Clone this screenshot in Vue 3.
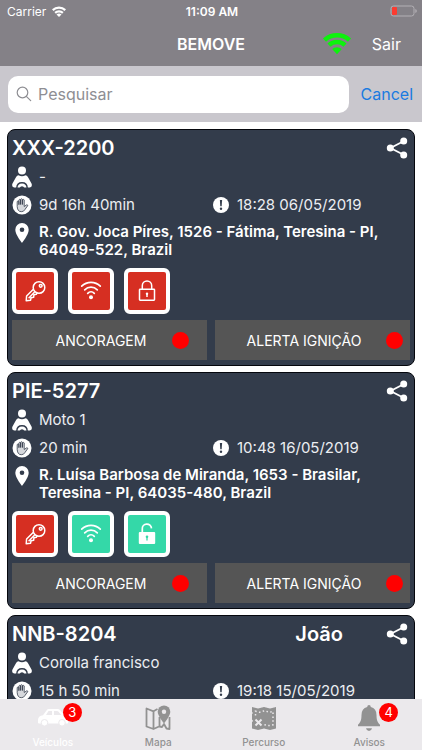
<script setup>
import { ref } from 'vue'

const query = ref('')
const tab = ref('Veículos')

const vehicles = [
  {
    plate: 'XXX-2200', driver: '', name: '-', idle: '9d 16h 40min', date: '18:28 06/05/2019',
    address: ['R. Gov. Joca Píres, 1526 - Fátima, Teresina - PI,', '64049-522, Brazil'],
    online: false, locked: true
  },
  {
    plate: 'PIE-5277', driver: '', name: 'Moto 1', idle: '20 min', date: '10:48 16/05/2019',
    address: ['R. Luísa Barbosa de Miranda, 1653 - Brasilar,', 'Teresina - PI, 64035-480, Brazil'],
    online: true, locked: false
  },
  {
    plate: 'NNB-8204', driver: 'João', name: 'Corolla francisco', idle: '15 h 50 min', date: '19:18 15/05/2019',
    address: [],
    online: true, locked: false
  }
]

const tabs = [
  { label: 'Veículos', badge: 3 },
  { label: 'Mapa', badge: 0 },
  { label: 'Percurso', badge: 0 },
  { label: 'Avisos', badge: 4 }
]
</script>

<template>
  <div class="app">
    <header class="top">
      <div class="status">
        <div class="carrier">
          <span>Carrier</span>
          <svg width="14" height="11" viewBox="0 0 28 22" fill="none" stroke="#fff" stroke-width="4.400">
            <path d="M1.500 8.300a18 18 0 0 1 25 0M6.300 13.800a11 11 0 0 1 15.400 0" />
            <path d="M14 22l-5-5a7.500 7.500 0 0 1 10 0z" fill="#fff" stroke="none" />
          </svg>
        </div>
        <strong class="clock">11:09 AM</strong>
        <svg class="battery" width="27" height="12" viewBox="0 0 27 12">
          <rect x="1" y="1" width="23" height="10" rx="2.500" fill="none" stroke="#b3b0b5" />
          <rect x="2" y="2" width="5" height="8" rx="1" fill="#fb3b30" />
          <path d="M25.300 4v4q1.500-.5 1.500-2t-1.500-2z" fill="#b3b0b5" />
        </svg>
      </div>
      <div class="nav">
        <h1>BEMOVE</h1>
        <div class="nav-right">
          <svg width="30" height="24" viewBox="0 0 30 24" fill="none" stroke="#0df20d" stroke-width="4.600">
            <path d="M2.500 8.100a18.700 18.700 0 0 1 25 0M7 13.100a12 12 0 0 1 16 0" />
            <path d="M15 22.200l-4.800-5.200a7.200 7.200 0 0 1 9.600 0z" fill="#0df20d" stroke="none" />
          </svg>
          <button type="button" class="link exit">Sair</button>
        </div>
      </div>
    </header>

    <form class="search" role="search" @submit.prevent>
      <label class="field">
        <svg width="16" height="16" viewBox="0 0 16 16" fill="none" stroke="#8e8e93" stroke-width="1.200">
          <circle cx="6.500" cy="6.500" r="5.300" /><path d="M10.300 10.300l4.400 4.400" stroke-linecap="round" />
        </svg>
        <input v-model="query" type="text" placeholder="Pesquisar" aria-label="Pesquisar" />
      </label>
      <button type="button" class="link cancel" @click="query = ''">Cancel</button>
    </form>

    <main class="list">
      <article v-for="v in vehicles" :key="v.plate" class="card">
        <div class="head">
          <h2>{{ v.plate }}</h2>
          <span class="driver">{{ v.driver }}</span>
          <button type="button" class="share" aria-label="Compartilhar">
            <svg width="22" height="22" viewBox="0 0 22 22" fill="#fff">
              <path d="M18 4L4.500 11 18 18" fill="none" stroke="#fff" stroke-width="1.800" />
              <circle cx="17.700" cy="4" r="3.500" /><circle cx="4.300" cy="11" r="3.500" /><circle cx="17.700" cy="18" r="3.500" />
            </svg>
          </button>
        </div>

        <div class="row name">
          <svg width="20" height="22" viewBox="0 0 20 22" fill="#fff">
            <circle cx="10" cy="4.500" r="4" />
            <path d="M6.500 9.300Q10 11 13.500 9.300q1.500 0 2.400 1.700l3.600 6.600q1.200 3-1.600 3.900H2.100q-2.800-.9-1.600-3.900L4.100 11q.9-1.700 2.400-1.700z" />
            <path d="M4.800 22q.2-5.200 5.200-5.200t5.200 5.200" fill="none" stroke="#333c4b" stroke-width="1.400" />
            <path d="M7.800 22q.4-1.700 2.200-1.700t2.200 1.700z" fill="#333c4b" />
          </svg>
          <span>{{ v.name }}</span>
        </div>

        <div class="times">
          <div class="row">
            <svg width="20" height="20" viewBox="0 0 20 20">
              <circle cx="10" cy="10" r="9.500" fill="#fff" />
              <path d="M5.200 11.500V6.500q.8-1.200 1.700 0v3.200V4.900q.8-1.200 1.700 0v4.600V4.300q.9-1.200 1.800 0v5.200V4.900q.9-1.100 1.800 0v6.600l2.300-1.600q1.400-.3 1.200.8l-2.900 4q-1 2-3.500 2-3.700 0-4.100-5z" fill="#d6d8dc" stroke="#333c4b" stroke-width=".8" stroke-linejoin="round" />
            </svg>
            <span>{{ v.idle }}</span>
          </div>
          <div class="row">
            <svg width="16" height="16" viewBox="0 0 16 16">
              <circle cx="8" cy="8" r="8" fill="#fff" />
              <path d="M6.900 3h2.200l-.4 6.200H7.300z" fill="#333c4b" /><circle cx="8" cy="11.700" r="1.200" fill="#333c4b" />
            </svg>
            <span>{{ v.date }}</span>
          </div>
        </div>

        <div class="row place">
          <svg width="20" height="20" viewBox="0 0 20 20">
            <path d="M10 0a6.700 6.700 0 0 1 6.700 6.800C16.700 11.800 10 20 10 20S3.300 11.800 3.300 6.800A6.700 6.700 0 0 1 10 0z" fill="#fff" />
            <circle cx="10" cy="6.800" r="2.300" fill="#333c4b" />
          </svg>
          <address><span v-for="line in v.address" :key="line">{{ line }}</span></address>
        </div>

        <div class="tiles">
          <button type="button" class="tile" aria-label="Ignição">
            <svg width="22" height="22" viewBox="0 0 22 22" fill="none" stroke="#fff" stroke-width="1.500" stroke-linejoin="round">
              <circle cx="15" cy="7.500" r="5.800" /><circle cx="16.700" cy="5.800" r="1.400" />
              <path d="M9.400 9.200L2.600 16l-.4 4.700 4.300-.5.600-2.500 2.500-.4.400-2.600 2.300-.5.900-1.300M4.600 18.200l6-6.300" />
            </svg>
          </button>
          <button type="button" class="tile" :class="{ on: v.online }" aria-label="Conexão">
            <svg width="22" height="22" viewBox="0 0 22 22" fill="none" stroke="#fff" stroke-width="1.700" stroke-linecap="round">
              <path d="M1.700 6.200a13 13 0 0 1 18.600 0M4.700 9.800a8.900 8.900 0 0 1 12.600 0M7.700 13.300a4.700 4.700 0 0 1 6.600 0" />
              <circle cx="11" cy="17.200" r="2" fill="#fff" stroke="none" />
            </svg>
          </button>
          <button type="button" class="tile" :class="{ on: !v.locked }" aria-label="Bloqueio">
            <svg v-if="v.locked" width="22" height="22" viewBox="0 0 22 22" fill="none" stroke="#fff" stroke-width="1.500">
              <rect x="3.500" y="9.200" width="15" height="11" rx=".6" />
              <path d="M6.300 9V5.700a4.700 4.700 0 0 1 9.400 0V9" />
              <circle cx="11" cy="13.700" r="1.200" fill="#fff" stroke="none" /><path d="M11 14v3" />
            </svg>
            <svg v-else width="22" height="22" viewBox="0 0 22 22" fill="none" stroke="#fff" stroke-width="1.700">
              <rect x="2.800" y="9" width="16.400" height="12" rx="1" fill="#fff" stroke="none" />
              <path d="M6.300 9.500V6a4.600 4.600 0 0 1 9.200-.6" />
              <circle cx="11" cy="13.800" r="1.300" fill="#34d8a8" stroke="none" /><path d="M11 14v3.500" stroke="#34d8a8" stroke-width="1.300" />
            </svg>
          </button>
        </div>

        <div class="actions">
          <button type="button" class="action anchor"><span>ANCORAGEM</span><i class="dot"></i></button>
          <button type="button" class="action alert"><span>ALERTA IGNIÇÃO</span><i class="dot"></i></button>
        </div>
      </article>
    </main>

    <nav class="tabs">
      <a v-for="t in tabs" :key="t.label" href="#" class="tab" :class="{ active: tab === t.label }" @click.prevent="tab = t.label">
        <span class="glyph">
          <svg v-if="t.label === 'Veículos'" width="32" height="26" viewBox="0 0 32 26">
            <path d="M1 15q0-4 5-4.800L9.500 5.400Q10.300 4 12 4h8.500q1.600 0 2.700 1.300l4 4.700q4 .8 4 5v2.500q0 1-1 1H2q-1 0-1-1z" fill="currentColor" />
            <path d="M11.500 6L9 10h6V6zM17 6v4h7.300l-3-3.500q-.5-.5-1.300-.5z" fill="#ebe9ec" />
            <g fill="currentColor" stroke="#ebe9ec"><circle cx="7.500" cy="17.800" r="3.300" /><circle cx="25" cy="17.800" r="3.300" /></g>
          </svg>
          <svg v-else-if="t.label === 'Mapa'" width="26" height="26" viewBox="0 0 26 26" fill="none" stroke="currentColor" stroke-width="1.800" stroke-linejoin="round">
            <path d="M12.500 4L8.500 6.300 1.500 3.500v18l7 2.500 5.500-2.500M8.500 6.300V24" />
            <path d="M14.500 12v9.500L17 22l2-3 2.500 4.500 3 .5V12" />
            <path d="M19 .5a6.300 6.300 0 0 1 6.300 6.300C25.300 11 19 18.500 19 18.500S12.700 11 12.700 6.800A6.300 6.300 0 0 1 19 .5z" fill="currentColor" stroke="none" />
            <circle cx="19" cy="6.800" r="2.200" fill="#ebe9ec" stroke="none" />
          </svg>
          <svg v-else-if="t.label === 'Percurso'" width="26" height="26" viewBox="0 0 26 26" fill="none">
            <path d="M1 2l6 1.500L13 2l6 1.500L25 2v21.500L19 25l-6-1.500L7 25l-6-1.500V17l1.200-1L1 14.500V9l1-1-1-1z" fill="currentColor" />
            <path d="M4.500 10.500V6.300l4 1 5-1.500 5 1.500 3.500-.8v13.300l-4 .8-5-1" stroke="#ebe9ec" stroke-width="1.500" stroke-dasharray="1.500 2.400" />
            <path d="M4.500 14.500l6 6M10.500 14.500l-6 6" stroke="#ebe9ec" stroke-width="2" />
          </svg>
          <svg v-else width="24" height="26" viewBox="0 0 24 26" fill="currentColor">
            <path d="M12 0q1.700 0 1.800 1.900 5.700 1.300 5.700 8.100c0 6 1.500 7.700 3.500 9.700v1.600H1v-1.600c2-2 3.500-3.700 3.500-9.700q0-6.800 5.700-8.100Q10.300 0 12 0z" />
            <path d="M9 23.200h6q-.6 2.800-3 2.800t-3-2.800z" />
          </svg>
          <b v-if="t.badge" class="badge">{{ t.badge }}</b>
        </span>
        <span class="tab-label">{{ t.label }}</span>
      </a>
    </nav>
  </div>
</template>

<style>
body { margin: 0; background: #fff; }
</style>

<style scoped>
* { box-sizing: border-box; }
.app {
  height: 100vh;
  display: flex;
  flex-direction: column;
  font-family: Inter, "Liberation Sans", sans-serif;
  color: #fff;
}
button { font: inherit; color: inherit; border: 0; padding: 0; margin: 0; background: none; cursor: pointer; }
svg { display: block; flex: none; }
h1, h2 { margin: 0; font-weight: 600; }

.top { background: #848187; flex: none; }
.status {
  display: grid;
  grid-template-columns: 1fr auto 1fr;
  align-items: center;
  height: 22px;
  padding: 0 5px 0 7px;
  font-size: 12px;
}
.carrier { display: flex; align-items: center; gap: 6px; }
.clock { font-weight: 600; }
.battery { justify-self: end; }
.nav {
  display: grid;
  grid-template-columns: 1fr auto 1fr;
  align-items: center;
  height: 44px;
  padding: 0 21px;
}
.nav h1 { grid-column: 2; font-size: 16px; }
.nav-right { display: flex; justify-content: flex-end; align-items: center; gap: 20px; }
.exit, .cancel, .field input { font-size: 16px; }

.search {
  flex: none;
  display: flex;
  align-items: center;
  gap: 12px;
  height: 56px;
  padding: 0 9px 0 8px;
  background: #c9c7cd;
}
.field {
  flex: 1;
  min-width: 0;
  display: flex;
  align-items: center;
  gap: 6px;
  height: 37px;
  padding: 0 8px;
  border-radius: 10px;
  background: #fff;
}
.field input { flex: 1; min-width: 0; border: 0; outline: 0; padding: 0; background: none; font-family: inherit; color: #333; }
.field input::placeholder { color: #8e8e93; opacity: 1; }
.cancel { color: #1a7be0; }

.list {
  flex: 1;
  min-height: 0;
  overflow-y: auto;
  scrollbar-width: none;
  display: flex;
  flex-direction: column;
  gap: 6px;
  padding: 7px;
}
.card {
  flex: none;
  border: 1px solid #05070d;
  border-radius: 8px;
  padding: 5px 4px;
  background: #333c4b;
}
.head { display: flex; align-items: center; height: 26px; }
.head h2, .driver { font-size: 20px; line-height: 26px; font-weight: 600; }
.driver { margin-left: auto; margin-right: 43px; }
.share { margin-right: 2px; }
.row { display: flex; align-items: center; gap: 7px; font-size: 15px; line-height: 20px; color: #eceef2; }
.name { height: 32px; }
.times { display: grid; grid-template-columns: 1fr 1fr; gap: 4px; height: 23px; }
.times .row:last-child { gap: 8px; }
.place { align-items: flex-start; padding-top: 7px; }
.place address { font-style: normal; font-weight: 600; line-height: 18px; color: #fff; }
.place address span { display: block; }
.tiles { display: flex; gap: 10px; padding-top: 9px; }
.tile {
  display: grid;
  place-items: center;
  width: 46px;
  height: 46px;
  border: 4px solid #fff;
  border-radius: 6px;
  background: #d62f22;
}
.tile.on { background: #34d8a8; }
.actions { display: grid; grid-template-columns: 1fr 1fr; gap: 8px; padding-top: 6px; }
.action {
  display: grid;
  grid-template-columns: 1fr auto;
  align-items: center;
  height: 40px;
  background: #555;
  font-size: 14px;
}
.dot { width: 17px; height: 17px; border-radius: 50%; background: #f00; }
.anchor, .alert { padding: 0 18px; }
.alert { padding: 0 7px; }

.tabs {
  flex: none;
  display: grid;
  grid-template-columns: repeat(4, 1fr);
  height: 51px;
  padding-top: 6px;
  background: #ebe9ec;
}
.tab { display: flex; flex-direction: column; align-items: center; gap: 5px; color: #929292; text-decoration: none; }
.tab.active { color: #fff; }
.glyph { position: relative; }
.tab-label { font-size: 10px; line-height: 12px; font-weight: 500; }
.badge {
  position: absolute;
  top: -2px;
  left: calc(50% + 10px);
  width: 19px;
  height: 19px;
  border-radius: 50%;
  background: #f00;
  color: #fff;
  font-size: 13px;
  line-height: 19px;
  font-weight: 400;
  text-align: center;
}
</style>
